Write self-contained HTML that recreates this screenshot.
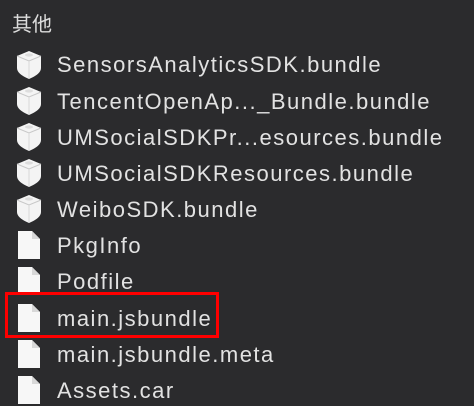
<html><head><style>
body{margin:0;width:474px;height:402px;background:#2b2b2d;font-family:"Liberation Sans","Noto Sans CJK SC",sans-serif;color:#e2e2e2;overflow:hidden;position:relative}
.t{position:absolute;left:12px;top:8px;font-size:20px;color:#dcdcdc}
.r{position:absolute;left:57px;font-size:22px;letter-spacing:1.5px;line-height:24px;white-space:nowrap}
.i{position:absolute;left:15px}
.box{position:absolute;left:5px;top:292px;width:208px;height:40px;border:3px solid #f00}
</style></head><body>
<div class="t">其他</div>
<svg width="0" height="0" style="position:absolute"><defs>
<g id="b"><path d="M2 6 L14 1 L26 6 L26 18 Q26 24 14 29 Q2 24 2 18 Z" fill="#f4f4f4"/><path d="M2 6 L14 11 L26 6" fill="none" stroke="#c8c8c8" stroke-width="1"/><path d="M14 11 L14 29" stroke="#d8d8d8" stroke-width="1"/><ellipse cx="14" cy="5" rx="4" ry="1.6" fill="#ddd"/></g>
<g id="f"><path d="M3 0 L17 0 L25 8 L25 28 L3 28 Z" fill="#f7f7f7"/><path d="M17 0 L17 8 L25 8" fill="#d8d8d8"/></g>
</defs></svg>
<svg class="i" style="top:50px" width="28" height="30"><use href="#b"/></svg><div class="r" style="top:53px">SensorsAnalyticsSDK.bundle</div>
<svg class="i" style="top:86px" width="28" height="30"><use href="#b"/></svg><div class="r" style="top:90px">TencentOpenAp..._Bundle.bundle</div>
<svg class="i" style="top:122px" width="28" height="30"><use href="#b"/></svg><div class="r" style="top:126px">UMSocialSDKPr...esources.bundle</div>
<svg class="i" style="top:158px" width="28" height="30"><use href="#b"/></svg><div class="r" style="top:162px">UMSocialSDKResources.bundle</div>
<svg class="i" style="top:194px" width="28" height="30"><use href="#b"/></svg><div class="r" style="top:198px">WeiboSDK.bundle</div>
<svg class="i" style="top:231px" width="28" height="30"><use href="#f"/></svg><div class="r" style="top:234px">PkgInfo</div>
<svg class="i" style="top:267px" width="28" height="30"><use href="#f"/></svg><div class="r" style="top:270px">Podfile</div>
<svg class="i" style="top:304px" width="28" height="30"><use href="#f"/></svg><div class="r" style="top:307px">main.jsbundle</div>
<svg class="i" style="top:340px" width="28" height="30"><use href="#f"/></svg><div class="r" style="top:343px">main.jsbundle.meta</div>
<svg class="i" style="top:376px" width="28" height="30"><use href="#f"/></svg><div class="r" style="top:379px">Assets.car</div>
<div class="box"></div>
</body></html>
